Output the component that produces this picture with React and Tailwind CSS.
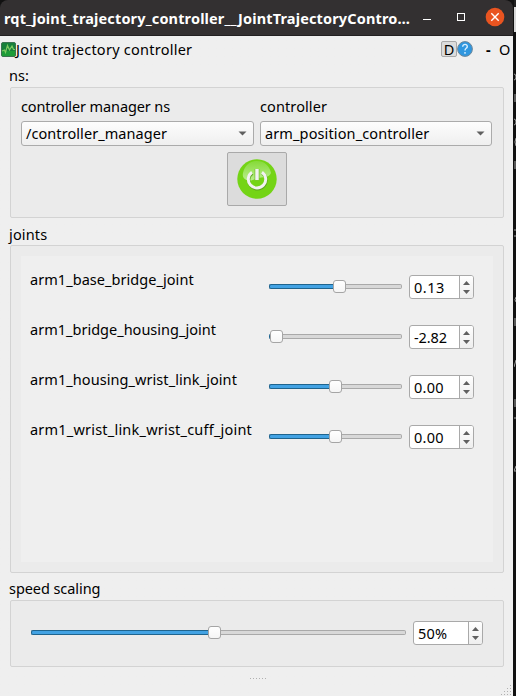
import React from "react";

function Text({ children, className = "" }) {
  return <span className={"block whitespace-nowrap leading-5 " + className}>{children}</span>;
}

function Combo({ children, className, textClass }) {
  return (
    <div className={"flex h-[25px] items-center justify-between rounded-[3px] border border-[#ababab] bg-linear-to-b from-[#fdfdfd] to-[#efefef] pl-1 pr-[6px] " + className}>
      <Text className={textClass}>{children}</Text>
      <svg width="9" height="5" viewBox="0 0 9 5"><path d="M0.5 .5h8L4.500 4.600z" fill="#606060" /></svg>
    </div>
  );
}

function Slider({ className, fill }) {
  return (
    <div className={"flex h-[13px] items-center " + className}>
      <div className={"h-[5px] rounded-l-[2px] border border-r-0 border-[#1f648e] bg-[#42a2e3] " + fill} />
      <div className="relative z-10 -mx-px h-[13px] w-[13px] shrink-0 rounded-[3px] border border-[#a5a5a5] bg-linear-to-b from-white to-[#f5f5f5]" />
      <div className="h-[5px] flex-1 rounded-r-[2px] border border-l-0 border-[#a9a9a9] bg-[#d8d8d8]" />
    </div>
  );
}

function Spin({ className, textClass = "", children }) {
  return (
    <div className={"flex h-6 overflow-hidden rounded-[3px] border border-[#a9a9a9] bg-white " + className}>
      <div className="flex-1 pl-1 pt-px"><Text className={textClass}>{children}</Text></div>
      <div className="flex w-[14px] flex-col items-center justify-center gap-[5px] border-l border-[#a9a9a9] bg-linear-to-b from-white to-[#eeeeee]">
        <svg width="7" height="4" viewBox="0 0 7 4"><path d="M0 4L3.500 0L7 4z" fill="#606060" /></svg>
        <svg width="7" height="4" viewBox="0 0 7 4"><path d="M0 0h7L3.500 4z" fill="#606060" /></svg>
      </div>
    </div>
  );
}

const joints = [
  { name: "arm1_base_bridge_joint", value: "0.13", fill: "w-[65px]", text: "tracking-[0.05px]", valueText: "tracking-[0.5px]" },
  { name: "arm1_bridge_housing_joint", value: "-2.82", fill: "w-[2px]", text: "tracking-[0.01px]", valueText: "tracking-[-0.1px]" },
  { name: "arm1_housing_wrist_link_joint", value: "0.00", fill: "w-[61px]", text: "tracking-[0.07px]", valueText: "tracking-[0.3px]" },
  { name: "arm1_wrist_link_wrist_cuff_joint", value: "0.00", fill: "w-[61px]", text: "tracking-[0.21px]", valueText: "tracking-[0.3px]" },
];

function PowerIcon() {
  return (
    <svg width="40" height="40" viewBox="0 0 40 40">
      <defs>
        <linearGradient id="gloss" x1="0" y1="0" x2="0" y2="1">
          <stop offset="0" stopColor="#86da38" />
          <stop offset="1" stopColor="#b9ee8c" />
        </linearGradient>
      </defs>
      <circle cx="20" cy="20" r="19.700" fill="#74d416" />
      <path d="M6 14C7.500 6.500 13 2 20 2s12.500 4.500 14 12c-2 5-8 3.500-14.500 5.500-3 1-4.500 2-7 2-5 0-7.500-3-6.500-7.500z" fill="url(#gloss)" />
      <path d="M15 13.200a8.700 8.700 0 1 0 10 0" fill="none" stroke="#5da51e" strokeWidth="3.200" transform="translate(.4 .9)" />
      <path d="M15 13.200a8.700 8.700 0 1 0 10 0" fill="none" stroke="#f2f2f2" strokeWidth="3" />
      <path d="M20 10v11.500" stroke="#7ac537" strokeWidth="5" />
      <path d="M20 10v11" stroke="#f2f2f2" strokeWidth="3.400" />
    </svg>
  );
}

function Backdrop() {
  return (
    <div className="flex w-[2px] flex-col overflow-hidden bg-[#111111]">
      <div className="h-[7px] shrink-0 bg-[#222222]" />
      <div className="h-[25px] shrink-0 bg-[#d8d8d8]" />
      <svg width="2" height="664" viewBox="0 0 2 664" className="shrink-0">
        <path d="M0 42q2 0 2 3t-2 3M1 62v8M0 87q2 0 2 3t-2 3M2 106q-2 4 0 8M1 129v8M0 198h2M0 204h2M2 265q-2 3 0 5M1 286v8M2 328l-2 7M1 367v8M0 386h2M2 434l-2 5h2" fill="none" stroke="#a0a0a0" />
      </svg>
    </div>
  );
}

export default function App() {
  return (
    <div className="flex h-[696px] w-[516px] overflow-hidden bg-[#111111] font-['Noto_Sans','Open_Sans',sans-serif] text-[14.500px] text-black">
      <div className="flex w-[513px] shrink-0 flex-col bg-[#efefef] bg-linear-to-b from-[#111111] from-[10px] to-[#efefef] to-[10px]">
        <header className="flex h-9 shrink-0 items-center rounded-t-[8px] border-b border-[#222021] bg-[#333031] pl-1 text-white">
          <Text className="w-[414px] font-bold tracking-[0.145px]">rqt_joint_trajectory_controller__JointTrajectoryContro…</Text>
          <svg width="88" height="35" viewBox="0 0 88 35" className="shrink-0">
            <path d="M5 19.500h8" stroke="#fff" />
            <rect x="39.500" y="13.500" width="7" height="7" fill="none" stroke="#fff" />
            <circle cx="77" cy="17" r="9.300" fill="#e95420" />
            <path d="M73.300 13.300l7.400 7.400m0-7.400l-7.400 7.400" stroke="#fff" strokeWidth="1.400" />
          </svg>
        </header>

        <div className="flex h-[26px] shrink-0 items-center pl-px">
          <svg width="15" height="15" viewBox="0 0 15 15">
            <rect x=".5" y=".5" width="14" height="14" rx="1.500" fill="#17803a" stroke="#3c7350" />
            <path d="M1 9h13v5H1z" fill="#1d9c38" />
            <path d="M1 9l2.500-1 1 2.500L6.500 3.500 8.500 8l2.500-4 1.500 3.500H14" fill="none" stroke="#7fca62" strokeWidth="1.200" />
          </svg>
          <Text className="tracking-[0.25px]">Joint trajectory controller</Text>
          <div className="ml-auto flex items-center">
            <div className="flex h-4 w-4 items-center justify-center rounded-[2px] border border-[#a8a8a8] bg-[#dcdcdc]"><Text>D</Text></div>
            <svg width="16" height="16" viewBox="0 0 16 16">
              <circle cx="8" cy="8" r="7.400" fill="#3097df" stroke="#6f8798" />
              <path d="M5.700 5.700c0-3.200 4.800-3 4.600-.1C10.200 7.400 8 7.300 8 9.400M8 11v1.700" fill="none" stroke="#d9efff" strokeWidth="1.400" />
            </svg>
            <Text className="ml-[13px] w-[13px] font-bold">-</Text>
            <Text className="w-[14px]">O</Text>
          </div>
        </div>

        <Text className="mt-[3px] ml-[9px] h-[22px]">ns:</Text>
        <section className="ml-[10px] h-[131px] w-[494px] shrink-0 rounded-[2px] border border-[#d3d3d3] bg-[#ebebeb] pt-[8px] pl-[10px]">
          <div className="flex gap-1.5">
            <div className="w-[233px]">
              <Text className="mb-[5px] tracking-[-0.11px]">controller manager ns</Text>
              <Combo className="w-[233px]" textClass="tracking-[0.07px]">/controller_manager</Combo>
            </div>
            <div className="w-[232px]">
              <Text className="mb-[5px] tracking-[0.1px]">controller</Text>
              <Combo className="w-[232px]" textClass="tracking-[0.12px]">arm_position_controller</Combo>
            </div>
          </div>
          <button className="mt-[6px] ml-[206px] flex h-[54px] w-[60px] items-center justify-center rounded-[2px] border border-[#a9a9a9] bg-[#dcdcdc]"><PowerIcon /></button>
        </section>

        <Text className="mt-[6px] ml-[9px] h-[22px] tracking-[0.15px]">joints</Text>
        <section className="ml-[10px] h-[328px] w-[494px] shrink-0 rounded-[2px] border border-[#d3d3d3] bg-[#ebebeb] p-[10px]">
          <div className="h-full w-[472px] bg-[#efefef] pt-[13px] pl-[9px]">
            {joints.map((j) => (
              <div key={j.name} className="flex h-[50px] items-start">
                <Text className={"w-[239px] " + j.text}>{j.name}</Text>
                <Slider className="mt-[11px] w-[133px]" fill={j.fill} />
                <Spin className="mt-[6px] ml-[7px] w-[65px]" textClass={j.valueText}>{j.value}</Spin>
              </div>
            ))}
          </div>
        </section>

        <Text className="mt-[5px] ml-[9px] h-[22px] tracking-[-0.07px]">speed scaling</Text>
        <section className="ml-[10px] flex h-[67px] w-[494px] shrink-0 items-start rounded-[2px] border border-[#d3d3d3] bg-[#ebebeb] pl-5">
          <Slider className="mt-[25px] w-[375px]" fill="w-[178px]" />
          <Spin className="mt-5 ml-[7px] w-[70px]" textClass="tracking-[0.2px]">50%</Spin>
        </section>
        <div className="flex flex-1 justify-between pt-[11px] pl-[250px]">
          <svg width="17" height="2" viewBox="0 0 17 2"><path d="M0 .5h17" stroke="#b0b0b0" strokeDasharray="1 2" /></svg>
          <svg width="12" height="11" viewBox="0 0 12 11" className="mt-[7px]">
            <path d="M9 .5h1M6 3.500h4M3 6.500h7M0 9.500h10" stroke="#b0b0b0" strokeDasharray="1 2" />
          </svg>
        </div>
      </div>
      <div className="ml-px flex"><Backdrop /></div>
    </div>
  );
}
